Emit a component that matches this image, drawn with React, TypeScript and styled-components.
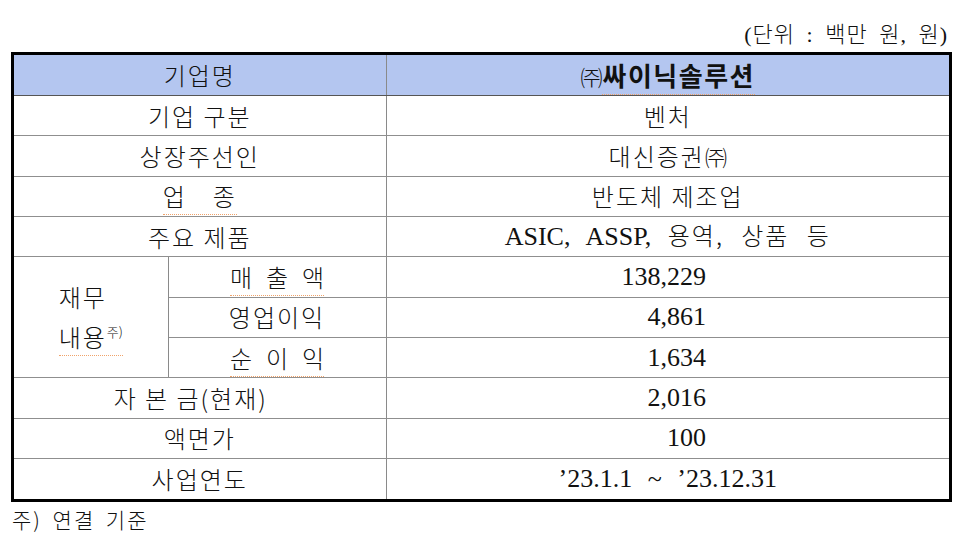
import React from "react";
import styled, { createGlobalStyle } from "styled-components";

const Global = createGlobalStyle`
  html, body { margin: 0; padding: 0; background: #fff; }
  body { font-family: "Noto Sans CJK KR", "Liberation Serif", sans-serif; color: #111; }
`;

const Page = styled.div`
  width: 960px;
  padding: 0 8px 0 11px;
  box-sizing: border-box;
`;

const Caption = styled.div`
  width: 941px;
  height: 52px;
  padding: 12px 4px 0 0;
  box-sizing: border-box;
  display: flex;
  align-items: center;
  justify-content: flex-end;
  font-family: "Liberation Serif", "Noto Sans CJK KR", serif;
  font-size: 22px;
  font-weight: 300;
  letter-spacing: 1px;
  word-spacing: 5px;
`;

const Frame = styled.div`
  width: 941px;
  border: 3px solid #000;
  box-sizing: border-box;
`;

const Table = styled.table`
  width: 100%;
  height: 444px;
  border-collapse: collapse;
  border-style: hidden;
  table-layout: fixed;
`;

const Row = styled.tr<{ $head?: boolean }>`
  height: 40px;
  background: ${(p) => (p.$head ? "#b4c6f0" : "#fff")};
  & > td {
    border-bottom: 1px solid ${(p) => (p.$head ? "#555" : "#8f8f8f")};
  }
`;

const Cell = styled.td<{ $num?: boolean; $align?: "center" | "right" }>`
  border: 1px solid #8a8a8a;
  padding: 0;
  text-align: ${(p) => p.$align ?? "center"};
  padding-right: ${(p) => (p.$align === "right" ? "243px" : "0")};
  vertical-align: middle;
  font-family: ${(p) =>
    p.$num
      ? `"Liberation Serif", "Noto Sans CJK KR", serif`
      : `"Noto Sans CJK KR", sans-serif`};
  font-size: ${(p) => (p.$num ? "26px" : "24px")};
  font-weight: ${(p) => (p.$num ? 400 : 300)};
  letter-spacing: ${(p) => (p.$num ? "0" : "2px")};
  line-height: 1;
  white-space: nowrap;
`;

const Spaced = styled.span<{ $gap?: number; $word?: number; $trail?: number }>`
  letter-spacing: ${(p) => p.$gap ?? 2}px;
  word-spacing: ${(p) => p.$word ?? 0}px;
  margin-right: ${(p) => (p.$trail ?? 0) - (p.$gap ?? 2)}px;
`;

const Hangul = styled.span`
  font-family: "Noto Sans CJK KR", sans-serif;
  font-size: 24px;
  font-weight: 300;
  letter-spacing: 2px;
`;

const Squiggle = styled.span`
  border-bottom: 1px dotted #f0a36a;
  padding-bottom: 1px;
`;

const Corp = styled.span`
  font-weight: 300;
  font-size: 22px;
  letter-spacing: 0;
`;

const Bold = styled.span`
  font-weight: 700;
  font-size: 26px;
  letter-spacing: 1.5px;
`;

const GroupLabel = styled.div`
  display: inline-block;
  text-align: left;
  line-height: 40px;
  font-size: 24px;
  letter-spacing: 2px;
`;

const Sup = styled.sup`
  font-size: 13px;
  vertical-align: 10px;
  line-height: 0;
  letter-spacing: 0;
`;

const Footer = styled.div`
  font-family: "Noto Sans CJK KR", sans-serif;
  font-size: 21px;
  font-weight: 300;
  line-height: 34px;
  padding-left: 1px;
  letter-spacing: 2px;
  word-spacing: 4px;
`;

export default function App() {
  return (
    <Page>
      <Global />
      <Caption>(단위 : 백만 원, 원)</Caption>
      <Frame>
        <Table>
          <colgroup>
            <col style={{ width: 154 }} />
            <col style={{ width: 218 }} />
            <col />
          </colgroup>
          <tbody>
            <Row $head>
              <Cell colSpan={2}>기업명</Cell>
              <Cell>
                <Corp>㈜</Corp>
                <Squiggle>
                  <Bold>싸이닉솔루션</Bold>
                </Squiggle>
              </Cell>
            </Row>
            <Row>
              <Cell colSpan={2}>기업 구분</Cell>
              <Cell>벤처</Cell>
            </Row>
            <Row>
              <Cell colSpan={2}>상장주선인</Cell>
              <Cell>
                대신증권<Corp>㈜</Corp>
              </Cell>
            </Row>
            <Row>
              <Cell colSpan={2}>
                <Squiggle>업　종</Squiggle>
              </Cell>
              <Cell>반도체 제조업</Cell>
            </Row>
            <Row>
              <Cell colSpan={2}>주요 제품</Cell>
              <Cell $num>
                <Spaced $gap={0} $word={10}>
                  ASIC, ASSP, <Hangul>용역, 상품 등</Hangul>
                </Spaced>
              </Cell>
            </Row>
            <Row>
              <Cell rowSpan={3}>
                <GroupLabel>
                  재무
                  <br />
                  <Squiggle>
                    내용<Sup>주)</Sup>
                  </Squiggle>
                </GroupLabel>
              </Cell>
              <Cell>
                <Squiggle>
                  <Spaced $gap={14}>매출액</Spaced>
                </Squiggle>
              </Cell>
              <Cell $num $align="right">138,229</Cell>
            </Row>
            <Row>
              <Cell>영업이익</Cell>
              <Cell $num $align="right">4,861</Cell>
            </Row>
            <Row>
              <Cell>
                <Squiggle>
                  <Spaced $gap={14}>순이익</Spaced>
                </Squiggle>
              </Cell>
              <Cell $num $align="right">1,634</Cell>
            </Row>
            <Row>
              <Cell colSpan={2}>
                <Spaced $trail={20}>자 본 금(현재)</Spaced>
              </Cell>
              <Cell $num $align="right">2,016</Cell>
            </Row>
            <Row>
              <Cell colSpan={2}>액면가</Cell>
              <Cell $num $align="right">100</Cell>
            </Row>
            <Row>
              <Cell colSpan={2}>사업연도</Cell>
              <Cell $num>
                <Spaced $gap={0} $word={9}>’23.1.1 ~ ’23.12.31</Spaced>
              </Cell>
            </Row>
          </tbody>
        </Table>
      </Frame>
      <Footer>주) 연결 기준</Footer>
    </Page>
  );
}
